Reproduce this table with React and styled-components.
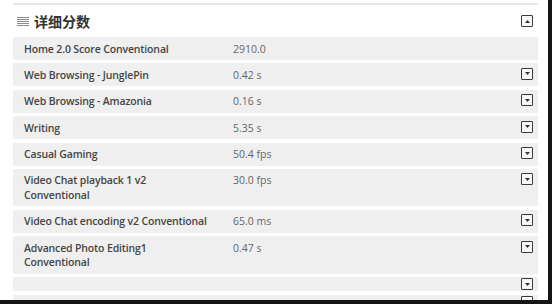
import React from 'react'
import styled, { createGlobalStyle } from 'styled-components'

const GlobalStyle = createGlobalStyle`
  html, body { margin: 0; padding: 0; background: #fff; }
  body { font-family: "Open Sans", "Liberation Sans", sans-serif; }
`

const scores = [
  { name: 'Home 2.0 Score Conventional', value: '2910.0', toggle: false },
  { name: 'Web Browsing - JunglePin', value: '0.42 s', toggle: true },
  { name: 'Web Browsing - Amazonia', value: '0.16 s', toggle: true },
  { name: 'Writing', value: '5.35 s', toggle: true },
  { name: 'Casual Gaming', value: '50.4 fps', toggle: true },
  { name: ['Video Chat playback 1 v2', 'Conventional'], value: '30.0 fps', toggle: true },
  { name: 'Video Chat encoding v2 Conventional', value: '65.0 ms', toggle: true },
  { name: ['Advanced Photo Editing1', 'Conventional'], value: '0.47 s', toggle: true },
  { name: '', value: '', toggle: true, blank: true },
  { name: '', value: '', toggle: true, blank: true },
]

const Frame = styled.div`
  width: 552px;
  height: 304px;
  box-sizing: border-box;
  border-right: 4px solid #151515;
  border-bottom: 4px solid #151515;
  padding: 3px 10px 0 13px;
  overflow: hidden;
  background: #fff;
`

const TopRule = styled.div`
  height: 2px;
  background: #e6e6e6;
`

const Header = styled.div`
  height: 32px;
  display: flex;
  align-items: center;
  padding: 0 5px 0 4px;
`

const Title = styled.h3`
  margin: 0 0 0 5px;
  flex: 1;
  font-family: "Noto Sans CJK SC", sans-serif;
  font-size: 14px;
  font-weight: 700;
  color: #333;
`

const List = styled.div`
  display: flex;
  flex-direction: column;
  gap: 3.4px;
`

const Row = styled.div`
  display: grid;
  grid-template-columns: 209px 1fr 12px;
  align-items: start;
  background: #efefef;
  padding: ${p => (p.$blank ? '1px 5px 1px 11px' : '4.5px 5px 4px 11px')};
  min-height: ${p => (p.$blank ? '12px' : 'auto')};
  font-size: 10.5px;
  line-height: 14.5px;
`

const Label = styled.div`
  font-weight: 600;
  letter-spacing: -0.15px;
  color: #454545;
`

const Value = styled.div`
  color: #666;
`

const ToggleBox = styled.span`
  width: 12px;
  height: 12px;
  box-sizing: border-box;
  border: 1.5px solid #3a3a3a;
  border-radius: 1px;
  background: #f8f8f8;
  display: flex;
  align-items: center;
  justify-content: center;
`

const Toggle = ({ up }) => (
  <ToggleBox>
    <svg width="5" height="3" viewBox="0 0 5 3">
      <path d={up ? 'M0 3 L2.5 0 L5 3 Z' : 'M0 0 L5 0 L2.5 3 Z'} fill="#333" />
    </svg>
  </ToggleBox>
)

const ListIcon = () => (
  <svg width="12" height="9" viewBox="0 0 12 9">
    {[0.5, 2.5, 4.5, 6.5, 8.5].map(y => (
      <line key={y} x1="0" y1={y} x2="12" y2={y} stroke="#8a8a8a" strokeWidth="1" />
    ))}
  </svg>
)

export default function App() {
  return (
    <>
      <GlobalStyle />
      <Frame>
        <TopRule />
        <Header>
          <ListIcon />
          <Title>详细分数</Title>
          <Toggle up />
        </Header>
        <List>
          {scores.map((s, i) => (
            <Row key={i} $blank={s.blank}>
              <Label>
                {Array.isArray(s.name)
                  ? s.name.map(line => <div key={line}>{line}</div>)
                  : s.name}
              </Label>
              <Value>{s.value}</Value>
              {s.toggle ? <Toggle /> : <span />}
            </Row>
          ))}
        </List>
      </Frame>
    </>
  )
}
